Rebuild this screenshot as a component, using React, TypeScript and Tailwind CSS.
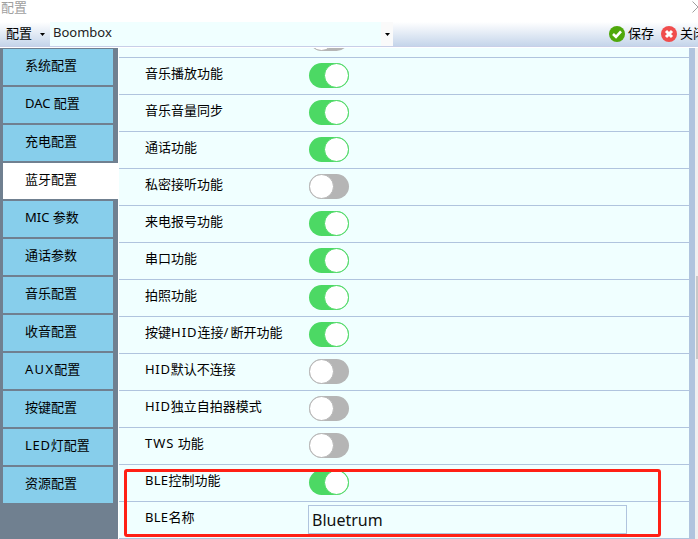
import type { ReactNode } from "react";

const font = { fontFamily: '"Noto Sans", "Noto Sans CJK SC", sans-serif' };

const menu: ReactNode[] = [
  "系统配置",
  "DAC 配置",
  "充电配置",
  "蓝牙配置",
  "MIC 参数",
  "通话参数",
  "音乐配置",
  "收音配置",
  <><span className="tracking-[1.3px]">AUX</span>配置</>,
  "按键配置",
  <><span className="tracking-[0.7px]">LED</span>灯配置</>,
  "资源配置",
];

const rows: [ReactNode, boolean][] = [
  ["", false],
  ["音乐播放功能", true],
  ["音乐音量同步", true],
  ["通话功能", true],
  ["私密接听功能", false],
  ["来电报号功能", true],
  ["串口功能", true],
  ["拍照功能", true],
  [<>按键<span className="tracking-[1px]">HID</span>连接<span className="tracking-[2px]">/</span>断开功能</>, true],
  [<><span className="tracking-[0.7px]">HID</span>默认不连接</>, false],
  [<><span className="tracking-[0.7px]">HID</span>独立自拍器模式</>, false],
  [<><span className="tracking-[1px]">TWS</span> 功能</>, false],
  [<><span className="tracking-[0.3px]">BLE</span>控制功能</>, true],
];

function Toggle({ on }: { on: boolean }) {
  return (
    <div className={`flex h-[25px] w-[40px] rounded-full ${on ? "justify-end bg-[#4cd964]" : "justify-start bg-[#b5b5b5]"}`}>
      <div className={`h-[25px] w-[25px] rounded-full border bg-white ${on ? "border-[#4cd964]" : "border-[#b5b5b5]"}`} />
    </div>
  );
}

function Row({ label, on }: { label: ReactNode; on: boolean }) {
  return (
    <div className="flex h-[37px] shrink-0 items-center border-b border-[#b0c4de] pb-[1px]">
      <div className="w-[190px] pb-[6px] pl-[26px] text-[13px] leading-[18px] text-black">{label}</div>
      <Toggle on={on} />
    </div>
  );
}

export default function App() {
  return (
    <div style={font} className="relative flex h-[539px] w-[698px] flex-col overflow-hidden bg-white">
      <div className="flex h-[22px] shrink-0 items-start justify-between pl-[1px]">
        <span className="text-[13px] leading-[15px] text-[#a0a0a0]">配置</span>
        <svg width="7" height="12" viewBox="0 0 7 12" className="mr-[-1px] mt-[1px]">
          <path d="M0.5 0.5 L6 6 L0.5 11.5" fill="none" stroke="#a0a0a0" strokeWidth="1" />
        </svg>
      </div>

      <div className="flex h-[25px] shrink-0 items-center border-b border-[#c8cfe8] bg-gradient-to-b from-white to-[#c5d5ea]">
        <div className="flex h-full w-[50px] items-center pl-[6px] text-[13px] text-black">
          <span className="w-[34px]">配置</span>
          <svg width="5" height="3" viewBox="0 0 5 3"><path d="M0 0 H5 L2.5 3 Z" fill="#000" /></svg>
        </div>
        <div className="flex h-[24px] w-[343px] items-center bg-[#f0ffff]">
          <span className="flex-1 pb-[2px] pl-[3px] text-[13px] text-[#222]">Boombox</span>
          <div className="flex h-full w-[12px] items-center justify-center bg-[#fafafa]">
            <svg width="5" height="3" viewBox="0 0 5 3"><path d="M0 0 H5 L2.5 3 Z" fill="#000" /></svg>
          </div>
        </div>
        <div className="flex-1" />
        <div className="flex shrink-0 items-center gap-[3px] pr-[3px] text-[13px] text-black">
          <svg width="16" height="16" viewBox="0 0 16 16">
            <circle cx="8" cy="8" r="8" fill="#4fa80b" />
            <path d="M4 8 L7 10.8 L12 5.4" fill="none" stroke="#fff" strokeWidth="2.6" />
          </svg>
          <span className="w-[30px]">保存</span>
        </div>
        <div className="flex w-[37px] shrink-0 items-center gap-[3px] overflow-hidden text-[13px] text-black">
          <svg width="16" height="16" viewBox="0 0 16 16" className="shrink-0">
            <circle cx="8" cy="8" r="8" fill="#f04d4d" />
            <path d="M5 5 L11 11 M11 5 L5 11" fill="none" stroke="#fff" strokeWidth="3" />
          </svg>
          <span className="whitespace-nowrap">关闭</span>
        </div>
      </div>

      <div className="mt-[1px] flex min-h-0 flex-1">
        <div className="flex w-[118px] shrink-0 flex-col gap-[2px] bg-[#708090] pt-[1px]">
          {menu.map((m, i) => (
            <div
              key={i}
              className={`ml-[3px] flex h-[36px] shrink-0 items-center pb-1 pl-[22px] text-[13px] leading-[18px] text-black ${
                i === 3 ? "bg-white" : "mr-[5px] bg-[#87ceeb]"
              }`}
            >
              {m}
            </div>
          ))}
        </div>
        <div className="ml-[1px] w-[570px] shrink-0 overflow-hidden bg-[#f0ffff]">
          <div className="-mt-[27px] flex flex-col">
            {rows.map(([label, on], i) => (
              <Row key={i} label={label} on={on} />
            ))}
            <div className="flex h-[37px] shrink-0 items-center border-b border-[#b0c4de] pb-[1px]">
              <div className="w-[189px] pb-[6px] pl-[26px] text-[13px] leading-[18px] text-black">
                <span className="tracking-[0.3px]">BLE</span>名称
              </div>
              <div className="flex h-[29px] w-[319px] items-center border border-[#b0c4de] pl-[3px] text-[16px] text-[#111]">Bluetrum</div>
            </div>
          </div>
        </div>
        <div className="w-[6px] shrink-0 bg-[#b0c4de]" />
        <div className="flex w-[3px] shrink-0 flex-col bg-[#f0f0f0]">
          <div className="ml-[1px] mt-[228px] h-[83px] w-[2px] bg-[#c8c8c8]" />
        </div>
      </div>

      <div className="absolute left-[124px] top-[469px] h-[68px] w-[537px] rounded-[3px] border-[3px] border-[#ff2015]" />
    </div>
  );
}
